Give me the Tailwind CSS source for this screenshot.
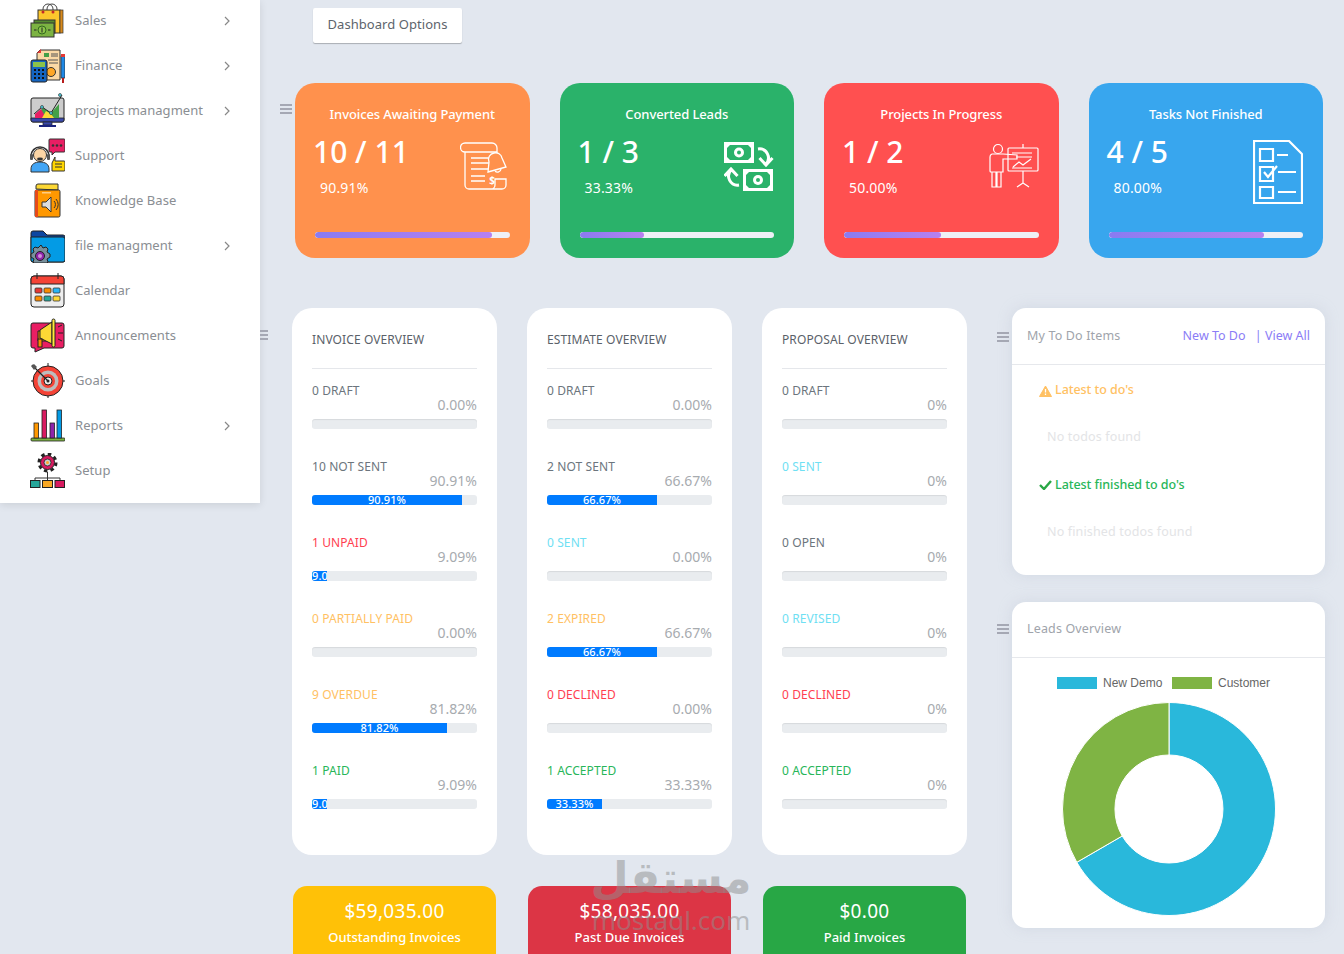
<!DOCTYPE html>
<html lang="en">
<head>
<meta charset="utf-8">
<title>Dashboard</title>
<script src="https://cdn.jsdelivr.net/npm/@tailwindcss/browser@4"></script>
</head>
<body class="relative h-[954px] w-[1344px] overflow-hidden bg-[#e2e7ef] font-['Noto_Sans',sans-serif]">
<div class="flex h-[954px] items-start">
  <!-- SIDEBAR -->
  <aside class="h-[503px] w-[260px] shrink-0 bg-white pt-0 shadow-[0_2px_8px_rgba(0,0,0,0.1)]">
    <ul class="-mt-[2px] text-[13px] tracking-[0.05px] text-[#8a8e93]">
      <li class="flex h-[45px] items-center gap-[10px] pl-[30px] pr-[30px]">
        <svg class="h-[35px] w-[35px] shrink-0" viewBox="0 0 35 35"><path d="M13 9V6a5 5 0 0 1 10 0v3M17 9V6a5 5 0 0 1 10 0v3" fill="none" stroke="#444" stroke-width="1"/><rect x="8" y="7" width="22" height="23" fill="#fcc72c" stroke="#333"/><rect x="30" y="7" width="3" height="23" fill="#d98a1c" stroke="#333" stroke-width=".7"/><circle cx="13" cy="9" r="1.5" fill="#c62828"/><circle cx="23" cy="9" r="1.500" fill="#c62828"/><rect x="4" y="17" width="21" height="13" fill="#558b2f" stroke="#333"/><rect x="1" y="20" width="23" height="14" fill="#7cb342" stroke="#333"/><circle cx="12" cy="27" r="4" fill="#8bc34a" stroke="#33691e"/><path d="M12 24.500v5M4 27h2.500M18 27h2.500" stroke="#222" stroke-width="1"/></svg>
        <span>Sales</span>
        <svg class="ml-auto h-[10px] w-[6px]" viewBox="0 0 6 10"><path d="M1 1l4 4-4 4" fill="none" stroke="#888" stroke-width="1.2"/></svg>
      </li>
      <li class="flex h-[45px] items-center gap-[10px] pl-[30px] pr-[30px]">
        <svg class="h-[35px] w-[35px] shrink-0" viewBox="0 0 35 35"><path d="M7 3l3-3h20v30H7z" transform="translate(0 2)" fill="#fbd9a5" stroke="#333"/><path d="M7 5l4-4v4z" fill="#e53935"/><rect x="14" y="5" width="5" height="4" fill="#43a047"/><path d="M21 6h7M21 8h7M18 12h10M19 15h9" stroke="#555" stroke-width="1"/><circle cx="21" cy="24" r="4.5" fill="#ffa726" stroke="#333"/><rect x="31" y="8" width="4" height="22" fill="#1e88e5" stroke="#333" stroke-width=".8"/><path d="M33 30v5" stroke="#b71c1c" stroke-width="2"/><rect x="31" y="6" width="4" height="3" fill="#e53935"/><rect x="1" y="12" width="16" height="22" rx="2" fill="#1565c0" stroke="#222"/><rect x="3" y="14" width="12" height="5" fill="#8bc34a"/><path d="M4 22h2M8 22h2M12 22h2M4 26h2M8 26h2M12 26h2M4 30h2M8 30h2M12 30h2" stroke="#111" stroke-width="2"/></svg>
        <span>Finance</span>
        <svg class="ml-auto h-[10px] w-[6px]" viewBox="0 0 6 10"><path d="M1 1l4 4-4 4" fill="none" stroke="#888" stroke-width="1.2"/></svg>
      </li>
      <li class="flex h-[45px] items-center gap-[10px] pl-[30px] pr-[30px]">
        <svg class="h-[35px] w-[35px] shrink-0" viewBox="0 0 35 35"><rect x="1" y="5" width="33" height="24" rx="2" fill="#ccc" stroke="#222"/><path d="M1 25h33v2a2 2 0 0 1-2 2H3a2 2 0 0 1-2-2z" fill="#3949ab" stroke="#222" stroke-width=".8"/><path d="M5 25l0-3 8-7 8 5 8-9v14z" fill="#43a047"/><path d="M5 25l0-4 6-5 5 9z" fill="#e91e63"/><path d="M12 25l4-7 5 3 3 4z" fill="#fdd835"/><path d="M4 21l8-7 9 6 8-13 3-5" fill="none" stroke="#222" stroke-width="1"/><circle cx="12" cy="14" r="1.5" fill="#4dd0e1" stroke="#222" stroke-width=".6"/><circle cx="21" cy="20" r="1.5" fill="#4dd0e1" stroke="#222" stroke-width=".6"/><circle cx="30" cy="2" r="1.5" fill="#4dd0e1" stroke="#222" stroke-width=".6"/><rect x="13" y="29" width="9" height="3" fill="#3949ab" stroke="#222" stroke-width=".7"/><rect x="9" y="32" width="17" height="2" fill="#1a237e"/></svg>
        <span>projects managment</span>
        <svg class="ml-auto h-[10px] w-[6px]" viewBox="0 0 6 10"><path d="M1 1l4 4-4 4" fill="none" stroke="#888" stroke-width="1.2"/></svg>
      </li>
      <li class="flex h-[45px] items-center gap-[10px] pl-[30px] pr-[30px]">
        <svg class="h-[35px] w-[35px] shrink-0" viewBox="0 0 35 35"><path d="M1 34v-3c0-5 4-7 9-7s9 2 9 7v3z" fill="#42a5f5" stroke="#333"/><circle cx="10" cy="17" r="6.5" fill="#fcd5a5" stroke="#333"/><path d="M1 18a9 9 0 0 1 18 0" fill="none" stroke="#333" stroke-width="1.6"/><rect x="0" y="16" width="3" height="6" rx="1" fill="#555"/><rect x="17" y="16" width="3" height="6" rx="1" fill="#555"/><ellipse cx="10" cy="21" rx="3" ry="1.4" fill="#333"/><path d="M20 1h14a1 1 0 0 1 1 1v11a1 1 0 0 1-1 1H25l-3 3v-3h-2a1 1 0 0 1-1-1V2a1 1 0 0 1 1-1z" fill="#e91e63" stroke="#333"/><circle cx="23" cy="7.5" r="1.3" fill="#333"/><circle cx="27" cy="7.5" r="1.3" fill="#333"/><circle cx="31" cy="7.5" r="1.3" fill="#333"/><path d="M22 25l3-6v4h9a1 1 0 0 1 1 1v8a1 1 0 0 1-1 1H22z" fill="#ffd600" stroke="#333"/><path d="M25 26h7M25 29h7" stroke="#333" stroke-width="1"/></svg>
        <span>Support</span>
      </li>
      <li class="flex h-[45px] items-center gap-[10px] pl-[30px] pr-[30px]">
        <svg class="h-[35px] w-[35px] shrink-0" viewBox="0 0 35 35"><path d="M6 6V3a2 2 0 0 1 2-2h20v6z" fill="#fdd835" stroke="#333"/><rect x="5" y="7" width="25" height="27" rx="1.5" fill="#ff9800" stroke="#333"/><rect x="5" y="7" width="3" height="27" fill="#e64a19"/><rect x="12" y="9" width="9" height="1.5" fill="#ffcc80"/><path d="M12 19h4l5-5v15l-5-5h-4z" fill="#ddd" stroke="#333"/><path d="M24 18a5 5 0 0 1 0 7M26 16a8 8 0 0 1 0 11" fill="none" stroke="#333" stroke-width="1"/></svg>
        <span>Knowledge Base</span>
      </li>
      <li class="flex h-[45px] items-center gap-[10px] pl-[30px] pr-[30px]">
        <svg class="h-[35px] w-[35px] shrink-0" viewBox="0 0 35 35"><path d="M1 5a2 2 0 0 1 2-2h10l4 4h16a2 2 0 0 1 2 2v23a2 2 0 0 1-2 2H3a2 2 0 0 1-2-2z" fill="#0d47a1" stroke="#222"/><path d="M1 9h32a2 2 0 0 1 2 2v21a2 2 0 0 1-2 2H3a2 2 0 0 1-2-2z" fill="#039be5" stroke="#222"/><path d="M11 17l2 3 3-1 2 2-1 3 3 2v3l-3 2 1 3-1 1H4l-1-1 1-3-3-2v-3l3-2-1-3 2-2 3 1z" fill="#78909c" stroke="#222"/><circle cx="10" cy="28" r="4.5" fill="#8e24aa" stroke="#222"/><circle cx="10" cy="28" r="2" fill="#ce93d8"/></svg>
        <span>file managment</span>
        <svg class="ml-auto h-[10px] w-[6px]" viewBox="0 0 6 10"><path d="M1 1l4 4-4 4" fill="none" stroke="#888" stroke-width="1.2"/></svg>
      </li>
      <li class="flex h-[45px] items-center gap-[10px] pl-[30px] pr-[30px]">
        <svg class="h-[35px] w-[35px] shrink-0" viewBox="0 0 35 35"><rect x="1" y="3" width="33" height="31" rx="3" fill="#eeeeee" stroke="#222"/><path d="M1 11V6a3 3 0 0 1 3-3h27a3 3 0 0 1 3 3v5z" fill="#f44336" stroke="#222"/><path d="M7 0v6M28 0v6" stroke="#222" stroke-width="1"/><rect x="5" y="15" width="7" height="5" rx="1" fill="#e53935" stroke="#333" stroke-width=".8"/><rect x="14" y="15" width="7" height="5" rx="1" fill="#fb8c00" stroke="#333" stroke-width=".8"/><rect x="23" y="15" width="7" height="5" rx="1" fill="#29b6f6" stroke="#333" stroke-width=".8"/><rect x="5" y="23" width="7" height="5" rx="1" fill="#fb8c00" stroke="#333" stroke-width=".8"/><rect x="14" y="23" width="7" height="5" rx="1" fill="#26a69a" stroke="#333" stroke-width=".8"/><rect x="23" y="23" width="7" height="5" rx="1" fill="#fdd835" stroke="#333" stroke-width=".8"/></svg>
        <span>Calendar</span>
      </li>
      <li class="flex h-[45px] items-center gap-[10px] pl-[30px] pr-[30px]">
        <svg class="h-[35px] w-[35px] shrink-0" viewBox="0 0 35 35"><path d="M3 5h29a2 2 0 0 1 2 2v21a2 2 0 0 1-2 2H14l-9 4v-4H3a2 2 0 0 1-2-2V7a2 2 0 0 1 2-2z" fill="#e91e63" stroke="#222"/><path d="M8 13h13v10H8z" fill="#fb8c00" stroke="#222"/><path d="M10 12l12-8v22L10 20z" fill="#fdd835" stroke="#222"/><rect x="22" y="1" width="3" height="28" rx="1.5" fill="#ffeb3b" stroke="#222"/><rect x="12" y="21" width="4" height="8" fill="#fb8c00" stroke="#222" transform="translate(-4 0)"/><path d="M28 9l4-2M28 15h5M28 21l4 2" stroke="#222" stroke-width="1"/></svg>
        <span>Announcements</span>
      </li>
      <li class="flex h-[45px] items-center gap-[10px] pl-[30px] pr-[30px]">
        <svg class="h-[35px] w-[35px] shrink-0" viewBox="0 0 35 35"><path d="M18 0v4M18 32v3M1 18h4M31 18h4" stroke="#222" stroke-width="1"/><circle cx="18" cy="18" r="15" fill="#f44336" stroke="#222"/><circle cx="18" cy="18" r="10.5" fill="#bdbdbd"/><circle cx="18" cy="18" r="7" fill="#f44336"/><circle cx="18" cy="18" r="4" fill="#eee" stroke="#222"/><circle cx="18" cy="18" r="1.5" fill="#222"/><path d="M2 2l16 16" stroke="#222" stroke-width="1.2"/><path d="M1 3l3-2 3 3-3 3z" fill="#555"/></svg>
        <span>Goals</span>
      </li>
      <li class="flex h-[45px] items-center gap-[10px] pl-[30px] pr-[30px]">
        <svg class="h-[35px] w-[35px] shrink-0" viewBox="0 0 35 35"><rect x="1" y="30" width="34" height="3" rx="1" fill="#7cb342" stroke="#222" stroke-width=".8"/><rect x="4" y="15" width="4.500" height="15" fill="#ff9800" stroke="#222" stroke-width=".8"/><rect x="12" y="2" width="4.500" height="28" fill="#d81b60" stroke="#222" stroke-width=".8"/><rect x="20" y="15" width="4.500" height="15" fill="#8e24aa" stroke="#222" stroke-width=".8"/><rect x="27" y="2" width="4.500" height="28" fill="#039be5" stroke="#222" stroke-width=".8"/></svg>
        <span>Reports</span>
        <svg class="ml-auto h-[10px] w-[6px]" viewBox="0 0 6 10"><path d="M1 1l4 4-4 4" fill="none" stroke="#888" stroke-width="1.2"/></svg>
      </li>
      <li class="flex h-[45px] items-center gap-[10px] pl-[30px] pr-[30px]">
        <svg class="h-[35px] w-[35px] shrink-0" viewBox="0 0 35 35"><path d="M17.500 19v8M5 28v-3h25v3" fill="none" stroke="#333" stroke-width="1"/><circle cx="17.500" cy="9.500" r="8.500" fill="none" stroke="#222" stroke-width="3" stroke-dasharray="3.500 3.170"/><circle cx="17.500" cy="9.500" r="7" fill="#d81b60" stroke="#222"/><circle cx="17.500" cy="9.500" r="3.500" fill="#ccc" stroke="#222" stroke-width=".8"/><circle cx="17.500" cy="9.500" r="1.500" fill="#ffa726"/><rect x="0.500" y="27.500" width="9.500" height="7" fill="#26a69a" stroke="#222"/><rect x="12.500" y="27.500" width="10" height="7" fill="#f9a825" stroke="#222"/><rect x="25" y="27.500" width="9.500" height="7" fill="#d81b60" stroke="#222"/></svg>
        <span>Setup</span>
      </li>
    </ul>
  </aside>

  <!-- MAIN -->
  <main class="min-w-0 flex-1">
    <button class="ml-[53px] mt-[8px] block h-[35px] w-[149px] rounded-[2px] bg-white pb-[2px] text-[13px] tracking-[0.05px] text-[#5d646c] shadow-[0_1px_1px_rgba(0,0,0,0.25)]">Dashboard Options</button>

    <!-- STAT CARDS -->
    <section class="relative ml-[35px] mr-[21px] mt-[40px] grid h-[175px] grid-cols-4 gap-[30px]">
      <span class="absolute -left-[15px] top-[21px] flex w-[12px] flex-col gap-[2px]"><i class="h-[2px] bg-[#a5a8b4]"></i><i class="h-[2px] bg-[#a5a8b4]"></i><i class="h-[2px] bg-[#a5a8b4]"></i></span>

      <div class="flex flex-col rounded-[20px] bg-[#ff914d] px-[20px] pt-[22px] text-white">
        <h3 class="text-center text-[13px] font-medium leading-[18px] -tracking-[0.1px]">Invoices Awaiting Payment</h3>
        <div class="mt-[8px] flex h-[70px] items-start justify-between">
          <div><p class="-ml-[2px] text-[30px] font-medium leading-[42px]">10 / 11</p><p class="ml-[5px] mt-[6px] text-[14px] leading-[18px] tracking-[0.2px]">90.91%</p></div>
          <svg class="mt-[11px] h-[50px] w-[50px]" viewBox="0 0 50 50" fill="none" stroke="#fff" stroke-width="1.3"><path d="M32 1H5a4.5 4.5 0 0 0 0 9h32V6a5 5 0 0 0-5-5zM5 10v33a4 4 0 0 0 4 4h33a4 4 0 0 0 4-4v-6H35v6a4 4 0 0 1-4 4H9"/><path d="M11 16h18M11 21h18M11 27h18M11 34h14M11 39h14"/><path d="M34 11a6.500 6.500 0 0 1 8 5l4 9-18 5 1-10a6.500 6.500 0 0 1 5-9z" fill="#ff914d"/><path d="M35 29a3.500 3.500 0 0 0 6-2"/><text x="32" y="42" text-anchor="middle" font-size="10" font-weight="700" fill="#fff" stroke="none">$</text></svg>
        </div>
        <div class="mt-[31px] h-[6px] overflow-hidden rounded-full bg-[#eef0f6]"><div class="h-full w-[90.91%] rounded-full bg-gradient-to-r from-[#8a7bf1] to-[#b780f0]"></div></div>
      </div>

      <div class="flex flex-col rounded-[20px] bg-[#2ab26a] px-[20px] pt-[22px] text-white">
        <h3 class="text-center text-[13px] font-medium leading-[18px] -tracking-[0.1px]">Converted Leads</h3>
        <div class="mt-[8px] flex h-[70px] items-start justify-between">
          <div><p class="-ml-[2px] text-[30px] font-medium leading-[42px]">1 / 3</p><p class="ml-[5px] mt-[6px] text-[14px] leading-[18px] tracking-[0.2px]">33.33%</p></div>
          <svg class="mt-[11px] h-[50px] w-[50px]" viewBox="0 0 50 50"><path d="M0 0h30v21H0z" fill="#fff"/><path d="M6 3h18l3 3v9l-3 3H6l-3-3V6z" fill="#2ab26a"/><circle cx="15" cy="10.500" r="5" fill="#fff"/><circle cx="15" cy="10.500" r="2" fill="#2ab26a"/><path d="M19 27h30v22H19z" fill="#fff"/><path d="M25 30h18l3 3v10l-3 3H25l-3-3V33z" fill="#2ab26a"/><circle cx="34" cy="38" r="5" fill="#fff"/><circle cx="34" cy="38" r="2" fill="#2ab26a"/><path d="M34 7a9 9 0 0 1 8 15M35.500 16l6.500 7 6.500-7M15 43a9 9 0 0 1-8-15M0.500 34l6.500-7 6.500 7" fill="none" stroke="#fff" stroke-width="3"/></svg>
        </div>
        <div class="mt-[31px] h-[6px] overflow-hidden rounded-full bg-[#eef0f6]"><div class="h-full w-[33%] rounded-full bg-gradient-to-r from-[#8a7bf1] to-[#b780f0]"></div></div>
      </div>

      <div class="flex flex-col rounded-[20px] bg-[#ff5050] px-[20px] pt-[22px] text-white">
        <h3 class="text-center text-[13px] font-medium leading-[18px] -tracking-[0.1px]">Projects In Progress</h3>
        <div class="mt-[8px] flex h-[70px] items-start justify-between">
          <div><p class="-ml-[2px] text-[30px] font-medium leading-[42px]">1 / 2</p><p class="ml-[5px] mt-[6px] text-[14px] leading-[18px] tracking-[0.2px]">50.00%</p></div>
          <svg class="mt-[12px] h-[50px] w-[50px]" viewBox="0 0 50 50" fill="none" stroke="#fff" stroke-width="1.200"><circle cx="9" cy="6" r="4.500"/><path d="M3 11h11l14 1v4H14v13H2a1 1 0 0 1-1-1V14a3 3 0 0 1 2-3zM3 29v15h4V29M8 29v15h4V29M14 18v11"/><rect x="19" y="5" width="30" height="23" rx="1"/><path d="M34 1v4M34 28v12M28 44l6-4 6 4M23 10h20M27 14h16M24 24l6-5 4 3 8-6M23 25h20"/></svg>
        </div>
        <div class="mt-[31px] h-[6px] overflow-hidden rounded-full bg-[#eef0f6]"><div class="h-full w-[50%] rounded-full bg-gradient-to-r from-[#8a7bf1] to-[#b780f0]"></div></div>
      </div>

      <div class="flex flex-col rounded-[20px] bg-[#38a6ee] px-[20px] pt-[22px] text-white">
        <h3 class="text-center text-[13px] font-medium leading-[18px] -tracking-[0.1px]">Tasks Not Finished</h3>
        <div class="mt-[8px] flex h-[70px] items-start justify-between">
          <div><p class="-ml-[2px] text-[30px] font-medium leading-[42px]">4 / 5</p><p class="ml-[5px] mt-[6px] text-[14px] leading-[18px] tracking-[0.2px]">80.00%</p></div>
          <svg class="mt-[9px] h-[64px] w-[50px]" viewBox="0 0 50 64" fill="none" stroke="#fff" stroke-width="2.200"><path d="M1 1h35l13 13v49H1zM36 1l13 13"/><path d="M7 9h13v12H7zM24 15h11M7 27h13v14H7zM11 32l4 5 9-11M25 32h18M7 47h13v11H7zM25 52h18"/></svg>
        </div>
        <div class="mt-[31px] h-[6px] overflow-hidden rounded-full bg-[#eef0f6]"><div class="h-full w-[80%] rounded-full bg-gradient-to-r from-[#8a7bf1] to-[#b780f0]"></div></div>
      </div>
    </section>

    <!-- LOWER AREA -->
    <section class="relative ml-[32px] mt-[50px] flex items-start">
      <span class="absolute -left-[32px] top-[22px] flex w-[8px] flex-col gap-[2px]"><i class="h-[2px] bg-[#a5a8b4]"></i><i class="h-[2px] bg-[#a5a8b4]"></i><i class="h-[2px] bg-[#a5a8b4]"></i></span>

      <div class="w-[675px] shrink-0">
        <div class="grid grid-cols-3 gap-[30px]">
          <!-- INVOICE -->
          <div class="h-[547px] rounded-[20px] bg-white px-[20px] text-[12px] leading-[15px] tracking-[0.1px]">
            <h4 class="flex h-[61px] items-center border-b border-[#e5e7eb] pt-[2px] text-[#5a6169]">INVOICE OVERVIEW</h4>
            <div class="mt-[14px] h-[76px]"><p class="text-[#6c757d]">0 DRAFT</p><p class="text-right text-[14px] leading-[14px] tracking-normal text-[#a7abaf]">0.00%</p><div class="mt-[7px] h-[10px] overflow-hidden rounded-[3px] bg-[#e9ecef] shadow-[inset_0_1px_1px_rgba(0,0,0,0.08)]"></div></div>
            <div class="h-[76px]"><p class="text-[#6c757d]">10 NOT SENT</p><p class="text-right text-[14px] leading-[14px] tracking-normal text-[#a7abaf]">90.91%</p><div class="mt-[7px] h-[10px] overflow-hidden rounded-[3px] bg-[#e9ecef]"><div class="h-full w-[90.91%] overflow-hidden bg-[#007bff] text-center text-[11px] font-medium leading-[10px] text-white">90.91%</div></div></div>
            <div class="h-[76px]"><p class="text-[#ff3e50]">1 UNPAID</p><p class="text-right text-[14px] leading-[14px] tracking-normal text-[#a7abaf]">9.09%</p><div class="mt-[7px] h-[10px] overflow-hidden rounded-[3px] bg-[#e9ecef]"><div class="h-full w-[9.09%] overflow-hidden whitespace-nowrap bg-[#007bff] text-[11px] font-medium leading-[10px] text-white">9.09%</div></div></div>
            <div class="h-[76px]"><p class="text-[#ffc163]">0 PARTIALLY PAID</p><p class="text-right text-[14px] leading-[14px] tracking-normal text-[#a7abaf]">0.00%</p><div class="mt-[7px] h-[10px] overflow-hidden rounded-[3px] bg-[#e9ecef] shadow-[inset_0_1px_1px_rgba(0,0,0,0.08)]"></div></div>
            <div class="h-[76px]"><p class="text-[#ffc163]">9 OVERDUE</p><p class="text-right text-[14px] leading-[14px] tracking-normal text-[#a7abaf]">81.82%</p><div class="mt-[7px] h-[10px] overflow-hidden rounded-[3px] bg-[#e9ecef]"><div class="h-full w-[81.82%] overflow-hidden bg-[#007bff] text-center text-[11px] font-medium leading-[10px] text-white">81.82%</div></div></div>
            <div class="h-[76px]"><p class="text-[#28b659]">1 PAID</p><p class="text-right text-[14px] leading-[14px] tracking-normal text-[#a7abaf]">9.09%</p><div class="mt-[7px] h-[10px] overflow-hidden rounded-[3px] bg-[#e9ecef]"><div class="h-full w-[9.09%] overflow-hidden whitespace-nowrap bg-[#007bff] text-[11px] font-medium leading-[10px] text-white">9.09%</div></div></div>
          </div>
          <!-- ESTIMATE -->
          <div class="h-[547px] rounded-[20px] bg-white px-[20px] text-[12px] leading-[15px] tracking-[0.1px]">
            <h4 class="flex h-[61px] items-center border-b border-[#e5e7eb] pt-[2px] text-[#5a6169]">ESTIMATE OVERVIEW</h4>
            <div class="mt-[14px] h-[76px]"><p class="text-[#6c757d]">0 DRAFT</p><p class="text-right text-[14px] leading-[14px] tracking-normal text-[#a7abaf]">0.00%</p><div class="mt-[7px] h-[10px] overflow-hidden rounded-[3px] bg-[#e9ecef] shadow-[inset_0_1px_1px_rgba(0,0,0,0.08)]"></div></div>
            <div class="h-[76px]"><p class="text-[#6c757d]">2 NOT SENT</p><p class="text-right text-[14px] leading-[14px] tracking-normal text-[#a7abaf]">66.67%</p><div class="mt-[7px] h-[10px] overflow-hidden rounded-[3px] bg-[#e9ecef]"><div class="h-full w-[66.67%] overflow-hidden bg-[#007bff] text-center text-[11px] font-medium leading-[10px] text-white">66.67%</div></div></div>
            <div class="h-[76px]"><p class="text-[#6fe0f3]">0 SENT</p><p class="text-right text-[14px] leading-[14px] tracking-normal text-[#a7abaf]">0.00%</p><div class="mt-[7px] h-[10px] overflow-hidden rounded-[3px] bg-[#e9ecef] shadow-[inset_0_1px_1px_rgba(0,0,0,0.08)]"></div></div>
            <div class="h-[76px]"><p class="text-[#ffc163]">2 EXPIRED</p><p class="text-right text-[14px] leading-[14px] tracking-normal text-[#a7abaf]">66.67%</p><div class="mt-[7px] h-[10px] overflow-hidden rounded-[3px] bg-[#e9ecef]"><div class="h-full w-[66.67%] overflow-hidden bg-[#007bff] text-center text-[11px] font-medium leading-[10px] text-white">66.67%</div></div></div>
            <div class="h-[76px]"><p class="text-[#ff3e50]">0 DECLINED</p><p class="text-right text-[14px] leading-[14px] tracking-normal text-[#a7abaf]">0.00%</p><div class="mt-[7px] h-[10px] overflow-hidden rounded-[3px] bg-[#e9ecef] shadow-[inset_0_1px_1px_rgba(0,0,0,0.08)]"></div></div>
            <div class="h-[76px]"><p class="text-[#28b659]">1 ACCEPTED</p><p class="text-right text-[14px] leading-[14px] tracking-normal text-[#a7abaf]">33.33%</p><div class="mt-[7px] h-[10px] overflow-hidden rounded-[3px] bg-[#e9ecef]"><div class="h-full w-[33.33%] overflow-hidden bg-[#007bff] text-center text-[11px] font-medium leading-[10px] text-white">33.33%</div></div></div>
          </div>
          <!-- PROPOSAL -->
          <div class="h-[547px] rounded-[20px] bg-white px-[20px] text-[12px] leading-[15px] tracking-[0.1px]">
            <h4 class="flex h-[61px] items-center border-b border-[#e5e7eb] pt-[2px] text-[#5a6169]">PROPOSAL OVERVIEW</h4>
            <div class="mt-[14px] h-[76px]"><p class="text-[#6c757d]">0 DRAFT</p><p class="text-right text-[14px] leading-[14px] tracking-normal text-[#a7abaf]">0%</p><div class="mt-[7px] h-[10px] overflow-hidden rounded-[3px] bg-[#e9ecef] shadow-[inset_0_1px_1px_rgba(0,0,0,0.08)]"></div></div>
            <div class="h-[76px]"><p class="text-[#6fe0f3]">0 SENT</p><p class="text-right text-[14px] leading-[14px] tracking-normal text-[#a7abaf]">0%</p><div class="mt-[7px] h-[10px] overflow-hidden rounded-[3px] bg-[#e9ecef] shadow-[inset_0_1px_1px_rgba(0,0,0,0.08)]"></div></div>
            <div class="h-[76px]"><p class="text-[#6c757d]">0 OPEN</p><p class="text-right text-[14px] leading-[14px] tracking-normal text-[#a7abaf]">0%</p><div class="mt-[7px] h-[10px] overflow-hidden rounded-[3px] bg-[#e9ecef] shadow-[inset_0_1px_1px_rgba(0,0,0,0.08)]"></div></div>
            <div class="h-[76px]"><p class="text-[#6fe0f3]">0 REVISED</p><p class="text-right text-[14px] leading-[14px] tracking-normal text-[#a7abaf]">0%</p><div class="mt-[7px] h-[10px] overflow-hidden rounded-[3px] bg-[#e9ecef] shadow-[inset_0_1px_1px_rgba(0,0,0,0.08)]"></div></div>
            <div class="h-[76px]"><p class="text-[#ff3e50]">0 DECLINED</p><p class="text-right text-[14px] leading-[14px] tracking-normal text-[#a7abaf]">0%</p><div class="mt-[7px] h-[10px] overflow-hidden rounded-[3px] bg-[#e9ecef] shadow-[inset_0_1px_1px_rgba(0,0,0,0.08)]"></div></div>
            <div class="h-[76px]"><p class="text-[#28b659]">0 ACCEPTED</p><p class="text-right text-[14px] leading-[14px] tracking-normal text-[#a7abaf]">0%</p><div class="mt-[7px] h-[10px] overflow-hidden rounded-[3px] bg-[#e9ecef] shadow-[inset_0_1px_1px_rgba(0,0,0,0.08)]"></div></div>
          </div>
        </div>

        <!-- TOTALS -->
        <div class="mt-[31px] grid h-[68px] grid-cols-3 gap-[32px] overflow-hidden px-[1px] text-center text-white">
          <div class="h-[120px] rounded-[14px] bg-[#ffc107] pt-[12px]"><p class="text-[19px] leading-[26px] tracking-[0.3px]">$59,035.00</p><p class="mt-[4px] text-[13px] font-medium leading-[18px]">Outstanding Invoices</p></div>
          <div class="h-[120px] rounded-[14px] bg-[#dc3545] pt-[12px]"><p class="text-[19px] leading-[26px] tracking-[0.3px]">$58,035.00</p><p class="mt-[4px] text-[13px] font-medium leading-[18px]">Past Due Invoices</p></div>
          <div class="h-[120px] rounded-[14px] bg-[#28a745] pt-[12px]"><p class="text-[19px] leading-[26px] tracking-[0.3px]">$0.00</p><p class="mt-[4px] text-[13px] font-medium leading-[18px]">Paid Invoices</p></div>
        </div>
      </div>

      <!-- RIGHT COLUMN -->
      <div class="ml-[45px] w-[313px] shrink-0">
        <div class="relative h-[267px] rounded-[14px] bg-white shadow-[0_0_14px_rgba(180,188,205,0.35)]">
          <span class="absolute -left-[15px] top-[24px] flex w-[12px] flex-col gap-[2px]"><i class="h-[2px] bg-[#a5a8b4]"></i><i class="h-[2px] bg-[#a5a8b4]"></i><i class="h-[2px] bg-[#a5a8b4]"></i></span>
          <div class="flex h-[57px] items-center justify-between border-b border-[#e6e8ec] px-[15px] text-[12.5px]">
            <span class="tracking-[0.15px] text-[#a0a4ab]">My To Do Items</span>
            <span class="text-[#8b7cf6]">New To Do <span class="ml-[6px]">| View All</span></span>
          </div>
          <div class="flex h-[51px] items-center pl-[27px] text-[12.5px] font-medium -tracking-[0.05px] text-[#ffc163]">
            <svg class="mr-[3px] h-[12px] w-[13px]" viewBox="0 0 13 12"><path d="M6.500 1L12.500 11.500H0.500z" fill="#ffc163" stroke="#ffc163" stroke-linejoin="round"/><path d="M6.500 4v3.500M6.500 8.500v1.500" stroke="#fff" stroke-width="1.300"/></svg>Latest to do's
          </div>
          <div class="flex h-[43px] items-center pl-[35px] text-[12.5px] tracking-[0.15px] text-[#e3e4e6]">No todos found</div>
          <div class="flex h-[52px] items-center pl-[27px] text-[12.5px] font-medium -tracking-[0.05px] text-[#28b659]">
            <svg class="mr-[3px] h-[10px] w-[13px]" viewBox="0 0 13 10"><path d="M1 5l4 4 7-8" fill="none" stroke="#28a745" stroke-width="2.400"/></svg>Latest finished to do's
          </div>
          <div class="flex h-[43px] items-center pl-[35px] text-[12.5px] tracking-[0.15px] text-[#e3e4e6]">No finished todos found</div>
        </div>

        <div class="relative mt-[27px] h-[326px] rounded-[14px] bg-white shadow-[0_0_14px_rgba(180,188,205,0.35)]">
          <span class="absolute -left-[15px] top-[22px] flex w-[12px] flex-col gap-[2px]"><i class="h-[2px] bg-[#a5a8b4]"></i><i class="h-[2px] bg-[#a5a8b4]"></i><i class="h-[2px] bg-[#a5a8b4]"></i></span>
          <div class="flex h-[56px] items-center border-b border-[#e6e8ec] pb-[1px] pl-[15px] text-[12.5px] tracking-[0.15px] text-[#a0a4ab]">Leads Overview</div>
          <div class="mt-[18px] flex items-center pl-[45px] font-['Liberation_Sans',sans-serif] text-[12px] leading-[14px] text-[#666]">
            <i class="h-[12px] w-[40px] bg-[#29b8db]"></i><span class="ml-[6px] w-[69px]">New Demo</span><i class="h-[12px] w-[40px] bg-[#7fb444]"></i><span class="ml-[6px]">Customer</span>
          </div>
          <svg class="ml-[49px] mt-[11px] h-[216px] w-[216px]" viewBox="0 0 216 216"><path d="M108 1.500A106.500 106.500 0 1 1 15.800 161.300L61.200 135A54 54 0 1 0 108 54Z" fill="#29b8db" stroke="#fff" stroke-width="1"/><path d="M15.800 161.300A106.500 106.500 0 0 1 108 1.500L108 54A54 54 0 0 0 61.200 135Z" fill="#7fb444" stroke="#fff" stroke-width="1"/></svg>
        </div>
      </div>
    </section>
  </main>
</div>

<!-- WATERMARK -->
<div class="pointer-events-none absolute left-[588px] top-[850px] w-[166px] text-center text-[#8f8f8f]/50">
  <p dir="rtl" class="font-['DejaVu_Sans',sans-serif] text-[44px] font-bold leading-[56px]">مستقل</p>
  <p class="-mt-[1px] text-[26px] leading-[30px]">mostaql.com</p>
</div>
</body>
</html>
